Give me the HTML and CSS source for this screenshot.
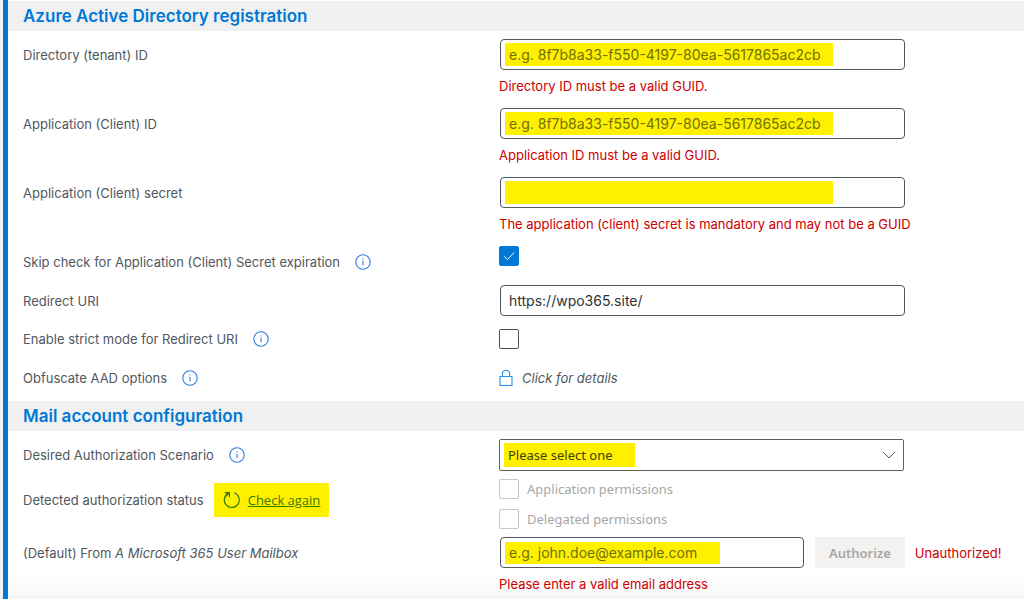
FILE: index.html
```
<!DOCTYPE html>
<html lang="en">
<head>
    <meta charset="UTF-8">
    <meta name="viewport" content="width=device-width, initial-scale=1.0">
    <title>Mail settings</title>
    <link rel="stylesheet" href="styles.css">
</head>
<body>

<svg class="sprite" aria-hidden="true">
    <symbol id="icon-info" viewBox="0 0 16 16">
        <circle cx="8" cy="8" r="7.2" fill="none" stroke="currentColor" stroke-width="1.1" />
        <path d="M8 6.7v4.6M8 4.4v1.2" fill="none" stroke="currentColor" stroke-width="1.1" />
    </symbol>
</svg>

<form class="settings" novalidate>
    <h2 class="section-title">Azure Active Directory registration</h2>

    <div class="row">
        <label class="row-label" for="tenant-id">Directory (tenant) ID</label>
        <div class="control">
            <input type="text" id="tenant-id" class="text-input marked" placeholder="e.g. 8f7b8a33-f550-4197-80ea-5617865ac2cb">
            <p class="error">Directory ID must be a valid GUID.</p>
        </div>
    </div>

    <div class="row">
        <label class="row-label" for="client-id">Application (Client) ID</label>
        <div class="control">
            <input type="text" id="client-id" class="text-input marked" placeholder="e.g. 8f7b8a33-f550-4197-80ea-5617865ac2cb">
            <p class="error">Application ID must be a valid GUID.</p>
        </div>
    </div>

    <div class="row">
        <label class="row-label" for="client-secret">Application (Client) secret</label>
        <div class="control">
            <input type="password" id="client-secret" class="text-input marked">
            <p class="error">The application (client) secret is mandatory and may not be a GUID</p>
        </div>
    </div>

    <div class="row">
        <div class="row-label">
            <label for="skip-check">Skip check for Application (Client) Secret expiration</label>
            <button type="button" class="info" aria-label="More information"><svg><use href="#icon-info" /></svg></button>
        </div>
        <div class="control">
            <span class="check">
                <input type="checkbox" id="skip-check" checked>
                <svg class="tick" viewBox="0 0 12 12"><path d="M1 6.2 4.4 9.6 11 2.6" fill="none" stroke="currentColor" /></svg>
            </span>
        </div>
    </div>

    <div class="row">
        <label class="row-label" for="redirect-uri">Redirect URI</label>
        <div class="control">
            <input type="text" id="redirect-uri" class="text-input" value="https://wpo365.site/">
        </div>
    </div>

    <div class="row compact">
        <div class="row-label">
            <label for="strict-mode">Enable strict mode for Redirect URI</label>
            <button type="button" class="info" aria-label="More information"><svg><use href="#icon-info" /></svg></button>
        </div>
        <div class="control middle">
            <span class="check"><input type="checkbox" id="strict-mode"></span>
        </div>
    </div>

    <div class="row">
        <div class="row-label">
            <span>Obfuscate AAD options</span>
            <button type="button" class="info" aria-label="More information"><svg><use href="#icon-info" /></svg></button>
        </div>
        <div class="control middle">
            <a href="#" class="details">
                <svg class="lock" viewBox="0 0 14 18"><path d="M1 7.5h12v9H1zM3.4 7.5V4.8a3.6 3.6 0 0 1 7.2 0v2.7" fill="none" stroke="currentColor" stroke-width="1.1" /></svg>
                <em>Click for details</em>
            </a>
        </div>
    </div>

    <h2 class="section-title">Mail account configuration</h2>

    <div class="row">
        <div class="row-label">
            <label for="scenario">Desired Authorization Scenario</label>
            <button type="button" class="info" aria-label="More information"><svg><use href="#icon-info" /></svg></button>
        </div>
        <div class="control">
            <div class="dropdown">
                <select id="scenario" class="marked">
                    <option>Please select one</option>
                </select>
                <svg class="chevron" viewBox="0 0 14 8"><path d="m1 1 6 6 6-6" fill="none" stroke="currentColor" /></svg>
            </div>
        </div>
    </div>

    <div class="row">
        <div class="row-label status">
            <span>Detected authorization status</span>
            <a href="#" class="check-again">
                <svg viewBox="0 0 18 18"><path d="M5.2 2.4A7.5 7.5 0 1 0 11 1.8M1.8 1.6h4.6v4.6M6.2 1.8 3 5" fill="none" stroke="currentColor" stroke-width="1.2" /></svg>
                <span>Check again</span>
            </a>
        </div>
        <div class="control permissions">
            <label class="permission"><span class="check"><input type="checkbox" disabled></span>Application permissions</label>
            <label class="permission"><span class="check"><input type="checkbox" disabled></span>Delegated permissions</label>
        </div>
    </div>

    <div class="row">
        <label class="row-label" for="mail-from"><span>(Default) From <em>A Microsoft 365 User Mailbox</em></span></label>
        <div class="control">
            <div class="mailbox">
                <input type="email" id="mail-from" class="text-input marked" placeholder="e.g. john.doe@example.com">
                <button type="button" class="authorize" disabled>Authorize</button>
                <span class="error-text">Unauthorized!</span>
            </div>
            <p class="error">Please enter a valid email address</p>
        </div>
    </div>
</form>

</body>
</html>
```
FILE: styles.css
```
* {
    box-sizing: border-box;
}

body {
    margin: 0;
    padding-left: 3px;
    background-color: #f0f0f1;
    font-family: Inter, sans-serif;
    font-size: 13px;
    line-height: 20px;
    color: #50575e;
}

.sprite {
    display: none;
}

.settings {
    min-height: 100vh;
    padding-top: 1px;
    border-left: 5px solid #0078d7;
    background: linear-gradient(to top, #f7f7f7, #fff 30px);
}

.section-title {
    margin: 0;
    padding-left: 15px;
    background-color: #f0f0f0;
    color: #0078d7;
    font-size: 17px;
    font-weight: 600;
    line-height: 30px;
}

.row + .section-title {
    margin-top: 8px;
}

.row {
    display: grid;
    grid-template-columns: 19fr 21fr;
    column-gap: 1px;
    padding: 8px 0 0 15px;
}

.compact {
    padding-top: 7px;
}

.row-label {
    display: flex;
    align-items: center;
    height: 31px;
}

.info {
    display: flex;
    margin-left: 15px;
    padding: 0;
    border: 0;
    background: none;
    color: #2b7de0;
}

.info svg {
    width: 16px;
    height: 16px;
}

.control {
    min-height: 31px;
}

.middle {
    display: flex;
    align-items: center;
}

.text-input {
    display: block;
    width: 100%;
    max-width: 405px;
    height: 31px;
    margin: 0 1px;
    padding: 0 8px;
    border: 1px solid #50575e;
    border-radius: 4px;
    background-color: #fff;
    color: #2c3338;
    font-family: inherit;
    font-size: 14px;
}

.marked {
    background-image: linear-gradient(#fff000, #fff000);
    background-repeat: no-repeat;
    background-position: 4px center;
    background-size: 328px 23px;
}

.text-input::placeholder {
    color: #6f6f08;
}

.error {
    margin: 6px 0 4px;
    color: #cc0000;
}

.error-text {
    color: #cc0000;
}

.check {
    display: block;
    position: relative;
    width: 20px;
    height: 20px;
}

.check input {
    display: block;
    appearance: none;
    width: 20px;
    height: 20px;
    margin: 0;
    border: 1px solid #50504f;
    border-radius: 2px;
    background-color: #fff;
}

.check input:checked {
    border-color: #0078d7;
    background-color: #0078d7;
}

.check input:disabled {
    border-color: #c8c6c4;
}

.tick {
    position: absolute;
    inset: 4px;
    color: #fff;
    pointer-events: none;
}

.details {
    display: flex;
    align-items: center;
    gap: 9px;
    color: #50575e;
    text-decoration: none;
}

.lock {
    width: 14px;
    height: 18px;
    color: #2490ea;
}

.dropdown {
    position: relative;
    max-width: 405px;
}

.dropdown select {
    display: block;
    appearance: none;
    width: 100%;
    height: 32px;
    padding: 0 28px 0 8px;
    border: 1px solid #605e5c;
    border-radius: 2px;
    background-color: #fff;
    background-size: 131px 24px;
    color: #403e08;
    font-family: "Noto Sans", sans-serif;
    font-size: 13px;
}

.chevron {
    position: absolute;
    top: 12px;
    right: 8px;
    width: 14px;
    height: 8px;
    color: #605e5c;
    pointer-events: none;
}

.status {
    height: 42px;
    gap: 10px;
}

.check-again {
    display: flex;
    align-items: center;
    gap: 7px;
    height: 34px;
    padding: 0 9px;
    background-color: #fff000;
    color: #3a7a08;
    font-family: "Open Sans", sans-serif;
    text-decoration: none;
}

.check-again span {
    text-decoration: underline;
}

.check-again svg {
    width: 18px;
    height: 18px;
}

.permissions {
    display: grid;
    gap: 10px;
}

.permission {
    display: flex;
    align-items: center;
    gap: 8px;
    color: #a8a6a4;
    font-family: "Noto Sans", sans-serif;
}

.mailbox {
    display: flex;
    align-items: center;
}

.mailbox .text-input {
    flex: 0 1 304px;
    background-size: 215px 22px;
}

.authorize {
    height: 31px;
    margin: 0 10px;
    padding: 0 14px;
    border: 0;
    border-radius: 2px;
    background-color: #f3f2f1;
    color: #a8a6a4;
    font-family: "Noto Sans", sans-serif;
    font-size: 13px;
    font-weight: 600;
}
```
